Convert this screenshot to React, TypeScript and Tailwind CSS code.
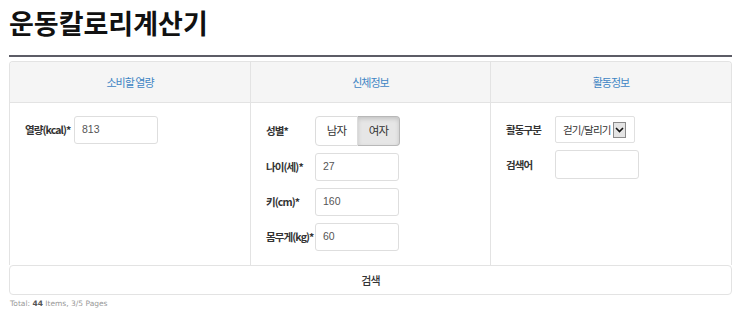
import React from "react";

const kr = { fontFamily: '"Noto Sans CJK KR", "Noto Sans", sans-serif' };

function Label({ children }: { children: React.ReactNode }) {
  return (
    <div className="w-[49px] shrink-0 text-[10.5px] font-bold text-[#333] tracking-[-0.9px] whitespace-nowrap">
      {children}
    </div>
  );
}

function Input({ value, h = "h-[28px]" }: { value?: string; h?: string }) {
  return (
    <div
      className={`w-[84px] ${h} border border-[#dedede] rounded-[3px] bg-white flex items-center pl-[7px] text-[10.5px] text-[#555]`}
      style={{ fontFamily: '"Liberation Sans", Arial, sans-serif' }}
    >
      {value}
    </div>
  );
}

export default function App() {
  return (
    <div className="w-[743px] h-[311px] bg-white overflow-hidden" style={kr}>
      <div className="h-[55px] pl-[9px] pt-[5px]">
        <div className="text-[27px] font-bold text-[#111] leading-[36px] tracking-[0px]">운동칼로리계산기</div>
      </div>
      <div className="ml-[9px] w-[723px] h-[2px] bg-[#5c5c66]" />
      <div className="ml-[9px] w-[723px] mt-[4px]">
        <div className="border border-b-0 border-[#e3e3e3] rounded-t-[4px] overflow-hidden">
          <div className="grid grid-cols-[240px_240px_1fr] bg-[#f5f5f5] h-[41px] border-b border-[#e3e3e3]">
            <div className="flex items-center justify-center text-[11px] text-[#3f85c4] tracking-[-1px]">소비할 열량</div>
            <div className="flex items-center justify-center text-[11px] text-[#3f85c4] tracking-[-1px] border-l border-[#e3e3e3]">신체정보</div>
            <div className="flex items-center justify-center text-[11px] text-[#3f85c4] tracking-[-1px] border-l border-[#e3e3e3]">활동정보</div>
          </div>
          <div className="grid grid-cols-[240px_240px_1fr] h-[162px]">
            <div className="pl-[15px] pt-[13px]">
              <div className="flex items-center">
                <Label>열량(kcal)*</Label>
                <Input value="813" h="h-[28px]" />
              </div>
            </div>
            <div className="pl-[15px] pt-[13px] border-l border-[#e3e3e3] flex flex-col gap-[7px]">
              <div className="flex items-center">
                <Label>성별*</Label>
                <div className="flex h-[30px] text-[11.5px] text-[#333] tracking-[-0.8px]">
                  <div className="w-[43px] border border-[#dcdcdc] rounded-l-[4px] bg-white flex items-center justify-center">남자</div>
                  <div className="w-[42px] border border-l-0 border-[#b8b8b8] rounded-r-[4px] bg-[#e6e6e6] shadow-[inset_0_2px_4px_rgba(0,0,0,0.15)] flex items-center justify-center">여자</div>
                </div>
              </div>
              <div className="flex items-center">
                <Label>나이(세)*</Label>
                <Input value="27" h="h-[28px]" />
              </div>
              <div className="flex items-center">
                <Label>키(cm)*</Label>
                <Input value="160" h="h-[28px]" />
              </div>
              <div className="flex items-center">
                <Label>몸무게(kg)*</Label>
                <Input value="60" h="h-[28px]" />
              </div>
            </div>
            <div className="pl-[15px] pt-[13px] border-l border-[#e3e3e3] flex flex-col gap-[7px]">
              <div className="flex items-center">
                <Label>활동구분</Label>
                <div className="w-[80px] h-[27px] border border-[#e0e0e0] rounded-[2px] bg-white flex items-center pl-[7px] text-[10.5px] text-[#333] tracking-[-0.8px]">
                  <span className="whitespace-nowrap">걷기/달리기</span>
                  <div className="ml-[2px] w-[13px] h-[16px] border border-[#8a8a8a] bg-[#e4e4e4] flex items-center justify-center">
                    <svg width="9" height="6" viewBox="0 0 9 6">
                      <path d="M1 1 L4.5 4.5 L8 1" fill="none" stroke="#111" strokeWidth="1.6" />
                    </svg>
                  </div>
                </div>
              </div>
              <div className="flex items-center">
                <Label>검색어</Label>
                <Input h="h-[29px]" />
              </div>
            </div>
          </div>
        </div>
        <div className="h-[30px] border border-[#e3e3e3] rounded-[4px] flex items-center justify-center text-[11px] font-medium text-[#333] tracking-[-0.8px]">
          검색
        </div>
        <div className="mt-[3px] pl-[1px] text-[7.5px] text-[#999]" style={{ fontFamily: '"DejaVu Sans", Tahoma, sans-serif' }}>
          Total: <b className="text-[#555]">44</b> Items, 3/5 Pages
        </div>
      </div>
    </div>
  );
}
